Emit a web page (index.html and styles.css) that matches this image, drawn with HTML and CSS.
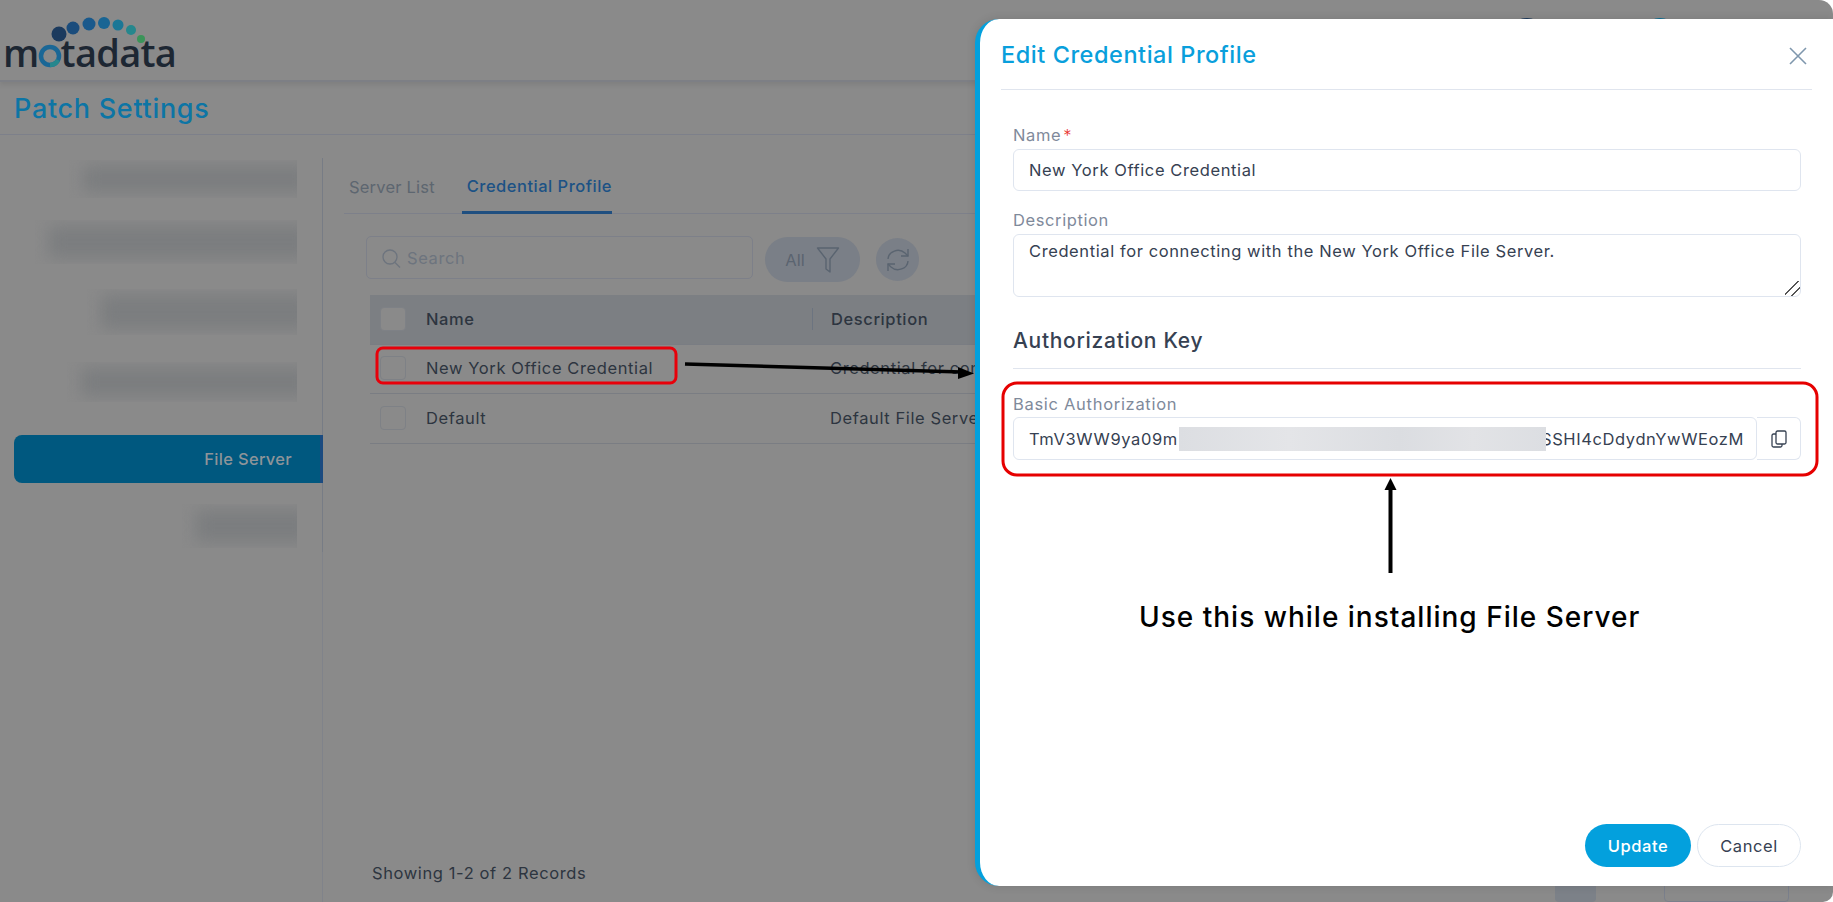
FILE: index.html
```html
<!DOCTYPE html>
<html lang="en">
  <head>
    <meta charset="UTF-8" />
    <title>Patch Settings</title>
    <link rel="stylesheet" href="styles.css">
  </head>
  <body>
    <div class="page">
      <header class="topbar">
        <div class="logo">
          <svg class="logo-dots" width="150" height="45" viewBox="0 0 150 45">
            <circle cx="59" cy="33" r="7.5" fill="#1b3a5e"/>
            <circle cx="73" cy="27" r="6.5" fill="#1a4c7c"/>
            <circle cx="89" cy="23" r="6.5" fill="#19598c"/>
            <circle cx="104" cy="22" r="6" fill="#196594"/>
            <circle cx="118" cy="24" r="5.5" fill="#1b7796"/>
            <circle cx="131" cy="29" r="5" fill="#26878d"/>
            <circle cx="141" cy="38" r="4" fill="#3b9459"/>
          </svg>
          <span class="logo-text">m</span>
          <svg class="logo-ring" width="24" height="24" viewBox="0 0 24 24">
            <circle cx="12" cy="12" r="9" fill="none" stroke="#1a6796" stroke-width="4.5"/>
            <path d="M12 21a9 9 0 0 0 8-5" fill="none" stroke="#26878d" stroke-width="4.5"/>
          </svg>
          <span class="logo-text">tadata</span>
        </div>
        <div class="avatars">
          <span class="avatar"></span>
          <span class="avatar teal"></span>
        </div>
      </header>
      <h1 class="page-title">Patch Settings</h1>
      <div class="layout">
        <aside class="sidebar">
          <nav class="side-nav">
            <div class="blur-row row-a"><span class="blur-bar"></span></div>
            <div class="blur-row row-b"><span class="blur-bar"></span></div>
            <div class="blur-row row-c"><span class="blur-bar"></span></div>
            <div class="blur-row row-d"><span class="blur-bar"></span></div>
            <a class="side-item">File Server</a>
            <div class="blur-row row-e"><span class="blur-bar"></span></div>
          </nav>
        </aside>
        <main class="content">
          <div class="tabs">
            <a class="tab">Server List</a>
            <a class="tab active">Credential Profile</a>
          </div>
          <div class="toolbar">
            <label class="search">
              <svg width="20" height="22" viewBox="0 0 20 22" fill="none" stroke="#6d747e" stroke-width="1.3">
                <circle cx="9" cy="10" r="7"/>
                <path d="M14 15.5l5 5"/>
              </svg>
              <input type="text" placeholder="Search">
            </label>
            <button class="pill">
              All
              <svg width="24" height="28" viewBox="0 0 24 28" fill="none" stroke="#5a6470" stroke-width="1.4" stroke-linejoin="round">
                <path d="M1.5 2h21l-8.5 11v13l-4-3V13z"/>
              </svg>
            </button>
            <button class="round-btn">
              <svg width="24" height="26" viewBox="0 0 24 26" fill="none" stroke="#5a6470" stroke-width="1.4">
                <path d="M2 12a10 9 0 0 1 17-6l3 3"/>
                <path d="M22 2v7h-7"/>
                <path d="M22 14a10 9 0 0 1-17 6l-3-3"/>
                <path d="M2 24v-7h7"/>
              </svg>
            </button>
          </div>
          <div class="table">
            <div class="tr head">
              <span class="check"></span>
              <span class="col-name">Name</span>
              <span class="col-desc">Description</span>
            </div>
            <div class="tr">
              <span class="check"></span>
              <span class="col-name">New York Office Credential</span>
              <span class="col-desc">Credential for connecting with the New York Office File Server.</span>
            </div>
            <div class="tr">
              <span class="check"></span>
              <span class="col-name">Default</span>
              <span class="col-desc">Default File Server Credential</span>
            </div>
          </div>
          <footer class="records">
            <span>Showing 1-2 of 2 Records</span>
            <span class="page-num"></span>
            <span class="page-size"></span>
          </footer>
        </main>
      </div>

      <section class="modal">
        <div class="modal-head">
          <h2>Edit Credential Profile</h2>
          <svg width="18" height="18" viewBox="0 0 18 18" stroke="#7f97ad" stroke-width="1.6">
            <path d="M1 1l16 16M17 1L1 17"/>
          </svg>
        </div>
        <form class="modal-body">
          <label class="field-label first">Name<span class="req">*</span></label>
          <input class="field" type="text" value="New York Office Credential">
          <label class="field-label">Description</label>
          <textarea class="field area">Credential for connecting with the New York Office File Server.</textarea>
          <h3 class="section-title">Authorization Key</h3>
          <label class="field-label key-label">Basic Authorization</label>
          <div class="key-group">
            <div class="key-value">
              <span class="key-start">TmV3WW9ya09m</span>
              <span class="redacted"></span>
              <span class="key-end">SSHI4cDdydnYwWEozMEx</span>
            </div>
            <span class="key-copy">
              <svg width="16" height="18" viewBox="0 0 16 18" fill="none" stroke="#364152" stroke-width="1.3">
                <rect x="5" y="1" width="10" height="13" rx="1.5"/>
                <path d="M5 4H2.5A1.5 1.5 0 0 0 1 5.500v10A1.500 1.500 0 0 0 2.500 17h7a1.500 1.500 0 0 0 1.500-1.500V14"/>
              </svg>
            </span>
          </div>
          <div class="modal-actions">
            <button type="button" class="btn primary">Update</button>
            <button type="button" class="btn">Cancel</button>
          </div>
        </form>
      </section>

      <!-- annotations drawn on top of the screenshot -->
      <svg class="marks" width="1833" height="902" viewBox="0 0 1833 902" fill="none">
        <rect x="377" y="348" width="299" height="35" rx="6" stroke="#e8000a" stroke-width="3"/>
        <rect x="1003" y="383" width="814" height="92" rx="14" stroke="#e60000" stroke-width="3"/>
        <path d="M685 364L962 372" stroke="#000" stroke-width="3.500"/>
        <path d="M958 367L974 373.500L958 379z" fill="#000"/>
        <path d="M1390.500 487V573" stroke="#000" stroke-width="4"/>
        <path d="M1384.500 490L1390.500 478L1396.500 490z" fill="#000"/>
      </svg>
      <p class="note">Use this while installing File Server</p>
    </div>
  </body>
</html>
```

FILE: styles.css
```css
* {
  box-sizing: border-box;
}

body {
  margin: 0;
  background: #fff;
  font-family: "Inter", "Liberation Sans", sans-serif;
  color: #2d3540;
  overflow: hidden;
}

.page {
  position: relative;
  height: 902px;
  display: flex;
  flex-direction: column;
  background: #8a8a8a;
  border-radius: 0 14px 10px 0;
  overflow: hidden;
}

/* top bar */
.topbar {
  height: 82px;
  flex: none;
  display: flex;
  align-items: center;
  justify-content: space-between;
  border-bottom: 2px solid #7d7f85;
  box-shadow: 0 3px 5px rgba(0, 0, 0, 0.08);
}

.logo {
  position: relative;
  display: flex;
  align-items: center;
  padding: 24px 0 0 3px;
}

.logo-dots {
  position: absolute;
  left: 0;
  top: -4px;
}

.logo-text {
  font-family: "Open Sans", sans-serif;
  font-size: 38px;
  font-weight: 600;
  line-height: 46px;
  letter-spacing: -0.7px;
  color: #1d2733;
}

.logo-ring {
  margin: 7px -1px 0 -1px;
}

.avatars {
  display: flex;
  gap: 89px;
  padding-right: 151px;
}

.avatar {
  width: 44px;
  height: 44px;
  border-radius: 50%;
  background: #1d3a5c;
}

.avatar.teal {
  background: #0b6f96;
}

.page-title {
  height: 53px;
  flex: none;
  margin: 0;
  padding: 10px 0 0 14px;
  border-bottom: 1px solid #7d808a;
  font-size: 27px;
  font-weight: 500;
  line-height: 34px;
  letter-spacing: 0.7px;
  color: #0d75a5;
}

.layout {
  flex: 1;
  display: flex;
  min-height: 0;
}

/* left nav */
.sidebar {
  width: 323px;
  flex: none;
  margin-top: 23px;
  border-right: 1px solid #80838a;
}

.side-nav {
  height: 394px;
  margin-right: -1px;
  display: flex;
  flex-direction: column;
  border-right: 1px solid #777c85;
}

.blur-row {
  overflow: hidden;
  margin-left: auto;
  margin-right: 25px;
  display: flex;
}

.blur-bar {
  flex: 1;
  margin: 6px -14px 6px 14px;
  background: #7b7d7f;
  filter: blur(8px);
}

.row-a {
  width: 228px;
  height: 38px;
  margin-top: 2px;
}

.row-b {
  width: 262px;
  height: 44px;
  margin-top: 22px;
}

.row-c {
  width: 210px;
  height: 46px;
  margin-top: 25px;
}

.row-d {
  width: 230px;
  height: 40px;
  margin-top: 27px;
}

.row-e {
  width: 115px;
  height: 44px;
  margin-top: 21px;
}

.side-item {
  height: 48px;
  margin: 33px -1px 0 14px;
  padding-right: 28px;
  display: flex;
  align-items: center;
  justify-content: flex-end;
  flex: none;
  background: #00587f;
  border-right: 3px solid #1b4b80;
  border-radius: 8px 0 0 8px;
  font-size: 16.500px;
  letter-spacing: 0.3px;
  font-weight: 500;
  color: #8e9499;
}

/* main part */
.content {
  flex: 1;
  min-width: 0;
  padding-left: 21px;
  display: flex;
  flex-direction: column;
}

.tabs {
  height: 79px;
  flex: none;
  display: flex;
  align-items: flex-end;
  gap: 27px;
  padding-left: 5px;
  border-bottom: 1px solid #7d808a;
}

.tab {
  font-size: 16.500px;
  line-height: 24px;
  padding-bottom: 14px;
  letter-spacing: 0.2px;
  color: #5d6670;
}

.tab.active {
  margin-bottom: -1px;
  padding: 0 0 13px 5px;
  border-bottom: 3px solid #1f4f80;
  font-weight: 500;
  letter-spacing: 0.5px;
  color: #1c5285;
}

.toolbar {
  margin: 22px 0 0 22px;
  height: 46px;
  flex: none;
  display: flex;
  align-items: flex-start;
}

.search {
  width: 387px;
  height: 43px;
  padding-left: 14px;
  display: flex;
  align-items: center;
  gap: 4px;
  border: 1px solid #7d8089;
  border-radius: 5px;
}

.search input {
  flex: 1;
  min-width: 0;
  border: 0;
  outline: 0;
  background: none;
  font: inherit;
  font-size: 16.500px;
  letter-spacing: 0.6px;
}

.search input::placeholder {
  color: #6d747e;
}

.pill {
  width: 95px;
  height: 45px;
  margin: 1px 0 0 12px;
  display: flex;
  align-items: center;
  justify-content: center;
  gap: 11px;
  border: 0;
  border-radius: 23px;
  background: #7a7f87;
  font: inherit;
  font-size: 16.500px;
  color: #5a6470;
}

.round-btn {
  width: 43px;
  height: 43px;
  margin: 2px 0 0 16px;
  padding: 0;
  display: flex;
  align-items: center;
  justify-content: center;
  border: 0;
  border-radius: 50%;
  background: #7a7f87;
}

.table {
  width: 605px;
  overflow: hidden;
  margin: 13px 0 0 26px;
}

.tr {
  height: 49px;
  display: flex;
  align-items: center;
  padding: 0 0 2px 10px;
  border-bottom: 1px solid #7a7d83;
  font-size: 16.500px;
  letter-spacing: 0.6px;
  white-space: nowrap;
}

.tr:last-child {
  height: 50px;
}

.tr.head {
  height: 50px;
  background: #7c7f83;
  font-weight: 500;
}

.check {
  width: 26px;
  height: 24px;
  flex: none;
  background: #8a8a8a;
  border: 1px solid #7e8186;
  border-radius: 4px;
}

.col-name {
  width: 406px;
  flex: none;
  padding-left: 20px;
}

.col-desc {
  flex: 1;
  min-width: 0;
  overflow: hidden;
  padding-left: 18px;
}

.head .col-desc {
  border-left: 1px solid #6c7480;
  line-height: 22px;
}

.records {
  margin-top: auto;
  height: 40px;
  flex: none;
  display: flex;
  align-items: flex-end;
  padding: 0 44px 0 28px;
  font-size: 16.500px;
  letter-spacing: 0.6px;
}

.records > span:first-child {
  margin-right: auto;
  padding-bottom: 17px;
  line-height: 24px;
}

.page-num {
  width: 41px;
  height: 30px;
  border-radius: 4px;
  background: #7c8188;
}

.page-size {
  width: 125px;
  height: 30px;
  margin-left: 68px;
  border: 1px solid #7a7f8b;
  border-radius: 4px;
}

/* side panel */
.modal {
  position: absolute;
  left: 975px;
  top: 19px;
  right: 0;
  bottom: 16px;
  display: flex;
  flex-direction: column;
  background: #fff;
  border-left: 5px solid #03a0dd;
  border-radius: 24px 0 0 24px;
  box-shadow: 0 0 10px rgba(0, 0, 0, 0.12);
}

.modal-head {
  height: 71px;
  flex: none;
  margin: 0 21px;
  padding-right: 5px;
  display: flex;
  align-items: center;
  justify-content: space-between;
  border-bottom: 1px solid #e0e5ee;
}

.modal-head h2 {
  margin: 0;
  font-size: 23.500px;
  font-weight: 500;
  letter-spacing: 0.55px;
  color: #099fdc;
}

.modal-head svg {
  margin-top: 3px;
}

.modal-body {
  flex: 1;
  display: flex;
  flex-direction: column;
  padding: 0 32px 19px 33px;
}

.field-label {
  margin: 18px 0 3px;
  font-size: 16.500px;
  line-height: 22px;
  letter-spacing: 0.6px;
  color: #7f8a9b;
}

.field-label.first {
  margin-top: 34px;
}

.req {
  margin-left: 2px;
  font-weight: 300;
  color: #e8322c;
}

.field {
  height: 42px;
  flex: none;
  padding: 0 15px;
  border: 1px solid #dfe5ef;
  border-radius: 6px;
  outline: 0;
  background: #fff;
  font: inherit;
  font-size: 16.500px;
  letter-spacing: 0.6px;
  color: #364152;
}

.area {
  height: 63px;
  padding-top: 6px;
  resize: vertical;
}

.area::-webkit-resizer {
  background:
    linear-gradient(135deg, transparent 68%, #555 68% 74%, transparent 74%),
    linear-gradient(135deg, transparent 42%, #555 42% 48%, transparent 48%);
}

.section-title {
  margin: 29px 0 0;
  padding-bottom: 12px;
  border-bottom: 1px solid #e0e5ee;
  font-size: 21px;
  font-weight: 500;
  line-height: 30px;
  letter-spacing: 0.7px;
  color: #364152;
}

.field-label.key-label {
  margin: 24px 0 2px;
  letter-spacing: 0.7px;
}

.key-group {
  height: 43px;
  flex: none;
  display: flex;
  font-size: 16.500px;
  letter-spacing: 0.6px;
  color: #364152;
}

.key-value {
  flex: 1;
  min-width: 0;
  padding: 0 13px 0 15px;
  display: flex;
  align-items: center;
  white-space: nowrap;
  border: 1px solid #dfe5ef;
  border-radius: 6px;
}

.key-start {
  width: 150px;
  flex: none;
  overflow: hidden;
}

.key-end {
  flex: 1;
  min-width: 0;
  overflow: hidden;
  text-indent: -5px;
}

.redacted {
  width: 367px;
  height: 24px;
  flex: none;
  background: linear-gradient(90deg, #dcdee2, #e4e5e8 30%, #dbdde1 60%, #e2e3e6 80%, #dcdee2);
}

.key-copy {
  width: 44px;
  flex: none;
  display: flex;
  align-items: center;
  justify-content: center;
  border: 1px solid #dfe5ef;
  border-left: 0;
  border-radius: 0 6px 6px 0;
}

.modal-actions {
  margin-top: auto;
  display: flex;
  justify-content: flex-end;
  gap: 6px;
}

.btn {
  width: 104px;
  height: 43px;
  border: 1px solid #dde5ef;
  border-radius: 22px;
  background: #fff;
  font: inherit;
  font-size: 16.500px;
  letter-spacing: 0.6px;
  color: #364152;
}

.btn.primary {
  width: 106px;
  border: 0;
  background: #03a0dd;
  font-weight: 500;
  color: #fff;
}

/* annotations */
.marks {
  position: absolute;
  left: 0;
  top: 0;
  pointer-events: none;
}

.note {
  position: absolute;
  left: 1139px;
  top: 600px;
  margin: 0;
  font-size: 28px;
  font-weight: 500;
  line-height: 34px;
  letter-spacing: 1px;
  white-space: nowrap;
  color: #000;
}
```
